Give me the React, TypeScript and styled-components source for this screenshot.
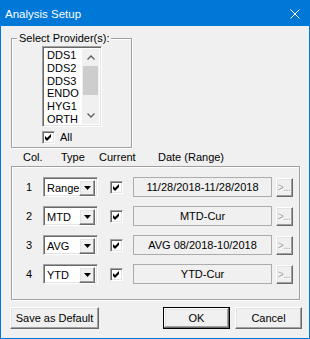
import React from "react";
import styled, { createGlobalStyle } from "styled-components";

const GlobalStyle = createGlobalStyle`
  html, body {
    margin: 0;
    padding: 0;
    background: #f0f0f0;
  }
  body {
    font-family: "Liberation Sans", Arial, sans-serif;
    font-size: 11px;
    color: #000;
  }
`;

const sunken = `
  box-sizing: border-box;
  border: 1px solid;
  border-color: #a0a0a0 #ffffff #ffffff #a0a0a0;
  box-shadow: inset 1px 1px 0 #696969, inset -1px -1px 0 #e3e3e3;
`;

const raised = `
  box-sizing: border-box;
  border: 1px solid;
  border-color: #ffffff #696969 #696969 #ffffff;
  box-shadow: inset -1px -1px 0 #a0a0a0, inset 1px 1px 0 #e3e3e3;
  background: #f0f0f0;
`;

type Row = { num: number; type: string; date: string };

const rows: Row[] = [
  { num: 1, type: "Range", date: "11/28/2018-11/28/2018" },
  { num: 2, type: "MTD", date: "MTD-Cur" },
  { num: 3, type: "AVG", date: "AVG 08/2018-10/2018" },
  { num: 4, type: "YTD", date: "YTD-Cur" },
];

const providers = ["DDS1", "DDS2", "DDS3", "ENDO", "HYG1", "ORTH"];

const CheckMark = () => (
  <svg width="9" height="9" viewBox="0 0 9 9">
    <path d="M1 3 L3 5 L7 1 L7 4 L3 8 L1 6 Z" fill="#000" />
  </svg>
);

const Check = () => (
  <SCheck>
    <CheckMark />
  </SCheck>
);

const Chevron = ({ up }: { up?: boolean }) => (
  <svg width="8" height="5" viewBox="0 0 8 5">
    <path
      d={up ? "M0.5 4.5 L4 1 L7.5 4.5" : "M0.5 0.5 L4 4 L7.5 0.5"}
      fill="none"
      stroke="#606060"
      strokeWidth="1.3"
    />
  </svg>
);

const Combo = ({ value }: { value: string }) => (
  <SCombo>
    <SComboText>{value}</SComboText>
    <SComboButton>
      <svg width="7" height="4" viewBox="0 0 7 4">
        <path d="M0 0 H7 L3.5 4 Z" fill="#000" />
      </svg>
    </SComboButton>
  </SCombo>
);

export default function App() {
  return (
    <>
      <GlobalStyle />
      <SWindow>
        <STitleBar>
          <STitle>Analysis Setup</STitle>
          <svg width="10" height="10" viewBox="0 0 10 10">
            <path d="M0.5 0.5 L9.5 9.5 M9.5 0.5 L0.5 9.5" stroke="#fff" strokeWidth="1" />
          </svg>
        </STitleBar>

        <SBody>
          <SGroup>
            <SLegend>Select Provider(s):</SLegend>
            <SProviderBox>
              <SList>
                <SItems>
                  {providers.map((p) => (
                    <SItem key={p}>{p}</SItem>
                  ))}
                </SItems>
                <SScrollBar>
                  <SArrow>
                    <Chevron up />
                  </SArrow>
                  <STrack>
                    <SThumb />
                  </STrack>
                  <SArrow>
                    <Chevron />
                  </SArrow>
                </SScrollBar>
              </SList>
              <SCheckRow>
                <Check />
                <SCheckLabel>All</SCheckLabel>
              </SCheckRow>
            </SProviderBox>
          </SGroup>

          <SHeader>
            <span>Col.</span>
            <span>Type</span>
            <span>Current</span>
            <span>Date (Range)</span>
          </SHeader>

          <SFrame>
            {rows.map((r) => (
              <SRow key={r.num}>
                <SNum>{r.num}</SNum>
                <Combo value={r.type} />
                <Check />
                <SDate>{r.date}</SDate>
                <SMore>&gt;...</SMore>
              </SRow>
            ))}
          </SFrame>

          <SButtons>
            <SButton $width={89}>Save as Default</SButton>
            <SRight>
              <SButton $width={67} $default>
                OK
              </SButton>
              <SButton $width={67}>Cancel</SButton>
            </SRight>
          </SButtons>
        </SBody>
      </SWindow>
    </>
  );
}

const SWindow = styled.div`
  box-sizing: border-box;
  width: 310px;
  height: 339px;
  border: 1px solid #0078d7;
  background: #f0f0f0;
  overflow: hidden;
`;

const STitleBar = styled.div`
  height: 25px;
  background: #0078d7;
  display: flex;
  align-items: center;
  justify-content: space-between;
  padding: 0 9px 0 4px;
`;

const STitle = styled.span`
  color: #fff;
  font-size: 11.5px;
`;

const SBody = styled.div`
  padding: 0 7px 0 9px;
`;

const SGroup = styled.fieldset`
  box-sizing: border-box;
  width: 121px;
  margin: 6px 0 0 1px;
  padding: 1px 3px 3px 5px;
  border: 1px solid #a0a0a0;
  box-shadow: inset 1px 1px 0 #fff, 1px 1px 0 #fff;
  min-inline-size: 0;
`;

const SLegend = styled.legend`
  padding: 0 2px;
  line-height: 13px;
  background: #f0f0f0;
`;

const SProviderBox = styled.div`
  padding-left: 25px;
`;

const SList = styled.div`
  ${sunken}
  width: 60px;
  height: 81px;
  padding: 2px;
  background: #fff;
  display: flex;
  overflow: hidden;
`;

const SItems = styled.div`
  flex: 1;
  overflow: hidden;
  padding-left: 2px;
`;

const SItem = styled.div`
  line-height: 12.8px;
  height: 12.8px;
  white-space: nowrap;
`;

const SScrollBar = styled.div`
  width: 17px;
  display: flex;
  flex-direction: column;
  background: #f0f0f0;
`;

const SArrow = styled.div`
  height: 17px;
  display: flex;
  align-items: center;
  justify-content: center;
`;

const STrack = styled.div`
  flex: 1;
`;

const SThumb = styled.div`
  height: 29px;
  margin: 0 1px;
  background: #cdcdcd;
`;

const SCheckRow = styled.div`
  display: flex;
  align-items: center;
  margin-top: 4px;
`;

const SCheck = styled.div`
  ${sunken}
  width: 13px;
  height: 13px;
  padding: 1px;
  background: #fff;
  display: flex;
  align-items: center;
  justify-content: center;
`;

const SCheckLabel = styled.span`
  margin-left: 5px;
  line-height: 13px;
`;

const SHeader = styled.div`
  display: grid;
  grid-template-columns: 38px 38px 59px auto;
  padding-left: 13px;
  margin-top: 2px;
  line-height: 14px;
`;

const SFrame = styled.div`
  box-sizing: border-box;
  width: 289px;
  margin: 2px 0 0 1px;
  padding: 10px 0 15px;
  border: 1px solid #a0a0a0;
  box-shadow: inset 1px 1px 0 #fff, 1px 1px 0 #fff;
  display: flex;
  flex-direction: column;
  gap: 9px;
`;

const SRow = styled.div`
  display: grid;
  grid-template-columns: 31px 67px 23px 143px 17px;
  align-items: center;
  height: 20px;
`;

const SNum = styled.span`
  padding-left: 14px;
`;

const SCombo = styled.div`
  ${sunken}
  width: 55px;
  height: 20px;
  padding: 2px;
  background: #fff;
  display: flex;
`;

const SComboText = styled.span`
  flex: 1;
  padding-left: 1px;
  line-height: 16px;
  overflow: hidden;
  white-space: nowrap;
`;

const SComboButton = styled.div`
  ${raised}
  width: 16px;
  height: 16px;
  display: flex;
  align-items: center;
  justify-content: center;
`;

const SDate = styled.div`
  box-sizing: border-box;
  width: 139px;
  height: 20px;
  border: 1px solid #acacac;
  display: flex;
  align-items: center;
  justify-content: center;
  white-space: nowrap;
`;

const SMore = styled.div`
  ${raised}
  width: 17px;
  height: 19px;
  padding: 0 1px;
  overflow: hidden;
  white-space: nowrap;
  color: #a0a0a0;
  text-shadow: 1px 1px 0 #fff;
  font-size: 10px;
  line-height: 17px;
  letter-spacing: -0.5px;
`;

const SButtons = styled.div`
  display: flex;
  justify-content: space-between;
  margin-top: 7px;
`;

const SRight = styled.div`
  display: flex;
  gap: 5px;
`;

const SButton = styled.div<{ $width: number; $default?: boolean }>`
  box-sizing: border-box;
  width: ${(p) => p.$width}px;
  height: 22px;
  display: flex;
  align-items: center;
  justify-content: center;
  background: #f0f0f0;
  border: 1px solid;
  border-color: ${(p) => (p.$default ? "#000" : "#fff #696969 #696969 #fff")};
  box-shadow: ${(p) =>
    p.$default
      ? "inset -1px -1px 0 #696969, inset 1px 1px 0 #fff, inset -2px -2px 0 #a0a0a0, inset 2px 2px 0 #e3e3e3"
      : "inset -1px -1px 0 #a0a0a0, inset 1px 1px 0 #e3e3e3"};
`;
